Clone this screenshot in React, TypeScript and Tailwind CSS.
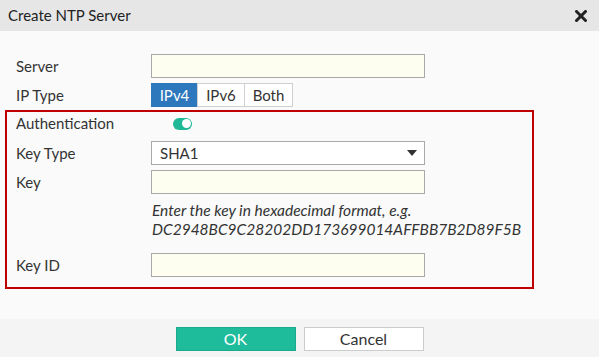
import React from "react";

const font = { fontFamily: "Lato, 'Open Sans', sans-serif" };

function Row({ label, children, h = "h-[24px]" }: { label: string; children?: React.ReactNode; h?: string }) {
  return (
    <div className={`flex items-center ${h}`}>
      <div className="w-[135px] shrink-0 text-[15px] text-[#333]">{label}</div>
      <div className="flex items-center">{children}</div>
    </div>
  );
}

function Input() {
  return <div className="w-[274px] h-[24px] border border-[#a9a9a9] bg-[#fefef0]" />;
}

export default function App() {
  return (
    <div className="w-[599px] h-[357px] flex flex-col bg-[#fafafa] overflow-hidden" style={font}>
      <div className="h-[31px] shrink-0 bg-[#e6e6e6] flex items-center justify-between pl-[8px] pr-[12px]">
        <span className="text-[15px] text-[#222]">Create NTP Server</span>
        <svg width="12" height="12" viewBox="0 0 12 12">
          <path d="M1.5 1.5 L10.5 10.5 M10.5 1.5 L1.5 10.5" stroke="#222" strokeWidth="3" strokeLinecap="square" />
        </svg>
      </div>
      <div className="flex-1 pl-[5px] pt-[23px]">
        <div className="pl-[11px] flex flex-col gap-[5px]">
          <Row label="Server">
            <Input />
          </Row>
          <Row label="IP Type">
            <div className="flex text-[15px]">
              <div className="w-[47px] h-[24px] flex items-center justify-center bg-[#2d78bd] border border-[#2d78bd] text-white">IPv4</div>
              <div className="w-[48px] h-[24px] -ml-px flex items-center justify-center bg-white border border-[#d0d0d0] text-[#333]">IPv6</div>
              <div className="w-[49px] h-[24px] -ml-px flex items-center justify-center bg-white border border-[#d0d0d0] text-[#333]">Both</div>
            </div>
          </Row>
        </div>
        <div className="mt-[3px] w-[529px] h-[179px] border-2 border-[#c00000] pl-[9px]">
          <Row label="Authentication" h="h-[23px]">
            <div className="ml-[22px] w-[19px] h-[12px] rounded-full bg-[#1fb896] flex items-center justify-end pr-[1.5px]">
              <div className="w-[9px] h-[9px] rounded-full bg-white" />
            </div>
          </Row>
          <div className="mt-[6px] flex flex-col gap-[5px]">
            <Row label="Key Type">
              <div className="w-[274px] h-[24px] border border-[#a9a9a9] bg-white flex items-center justify-between pl-[8px] pr-[7px] text-[15px] text-[#333]">
                <span>SHA1</span>
                <svg width="10" height="6" viewBox="0 0 10 6">
                  <path d="M0 0 H10 L5 6 Z" fill="#333" />
                </svg>
              </div>
            </Row>
            <Row label="Key">
              <Input />
            </Row>
          </div>
          <div className="mt-[7px] ml-[136px] text-[15.5px] leading-[19px] italic text-[#333]">
            <div>Enter the key in hexadecimal format, e.g.</div>
            <div>DC2948BC9C28202DD173699014AFFBB7B2D89F5B</div>
          </div>
          <div className="mt-[14px]">
            <Row label="Key ID">
              <Input />
            </Row>
          </div>
        </div>
      </div>
      <div className="h-[38px] shrink-0 bg-[#f4f4f4] flex justify-center gap-[8px] pt-[8px]">
        <div className="w-[120px] h-[24px] bg-[#1fbc9c] border border-[#1aaa8c] text-white text-[16px] flex items-center justify-center">OK</div>
        <div className="w-[120px] h-[24px] bg-white border border-[#cccccc] text-[#333] text-[16px] flex items-center justify-center">Cancel</div>
      </div>
    </div>
  );
}
